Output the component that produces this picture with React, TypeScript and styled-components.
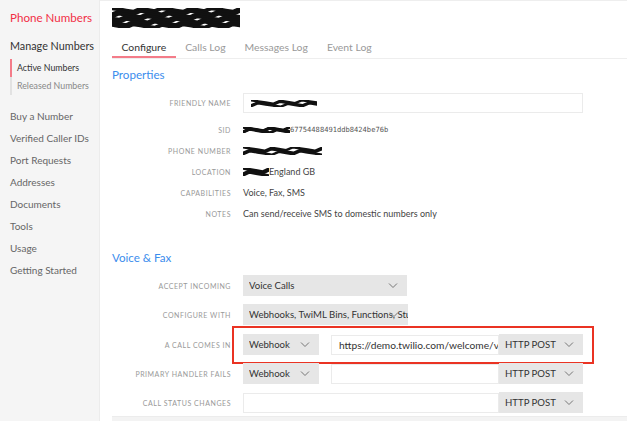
import { FC, ReactNode } from 'react'
import styled, { createGlobalStyle } from 'styled-components'

const GlobalStyle = createGlobalStyle`
  html, body {
    margin: 0;
    padding: 0;
    height: 100%;
    overflow: hidden;
    background: #fff;
  }

  body {
    font-family: Lato, "Open Sans", "Liberation Sans", sans-serif;
    color: #333;
  }
`

const Page = styled.div`
  display: flex;
  width: 627px;
  height: 421px;
  overflow: hidden;
`

const SideBar = styled.nav`
  display: flex;
  flex: 0 0 100px;
  flex-direction: column;
  background: #f5f5f5;
  border-right: 1px solid #ececec;
  box-sizing: border-box;
  padding: 10px 0 0 10px;
  white-space: nowrap;
`

const SideTitle = styled.div`
  color: #f22f46;
  font-size: 11.6px;
  line-height: 16px;
`

const SideHeading = styled.div`
  color: #333;
  font-size: 10.8px;
  line-height: 16px;
  margin-top: 12px;
`

const SubList = styled.div`
  display: flex;
  flex-direction: column;
  margin: 5px 0 10px;
`

const SubItem = styled.div<{ $active?: boolean }>`
  border-left: 2px solid ${p => (p.$active ? '#f47c89' : '#e2e2e2')};
  color: ${p => (p.$active ? '#333' : '#888')};
  font-size: 8.8px;
  line-height: 18px;
  padding-left: 5px;
`

const SideItem = styled.div`
  color: #666;
  font-size: 10px;
  line-height: 22px;
`

const Main = styled.main`
  display: flex;
  flex: 1 1 auto;
  flex-direction: column;
  border-top: 1px solid #eee;
  padding: 7px 0 0 12px;
  min-width: 0;
`

const Header = styled.div`
  display: flex;
  height: 22px;
`

const Tabs = styled.div`
  display: flex;
  margin-top: 12px;
  border-bottom: 1px solid #eee;
`

const Tab = styled.div<{ $active?: boolean }>`
  color: ${p => (p.$active ? '#333' : '#999')};
  font-size: 10.4px;
  line-height: 15px;
  padding: 0 9.5px 1px;
  border-bottom: 2px solid ${p => (p.$active ? '#f47c89' : 'transparent')};
`

const SectionTitle = styled.h2<{ $gap: number }>`
  color: #3b8ded;
  font-size: 11.6px;
  font-weight: 400;
  line-height: 16px;
  margin: ${p => p.$gap}px 0 0;
`

const Form = styled.div<{ $gap: number }>`
  display: flex;
  flex-direction: column;
  margin-top: ${p => p.$gap}px;
`

const Row = styled.div<{ $height: number; $gap?: number; $marked?: boolean }>`
  position: relative;
  display: flex;
  align-items: center;
  height: ${p => p.$height}px;
  margin-top: ${p => p.$gap ?? 0}px;

  ${p =>
    p.$marked &&
    `
    &::after {
      content: '';
      position: absolute;
      left: 120px;
      top: -8px;
      width: 362px;
      height: 38px;
      border: 2px solid #ea3323;
      box-sizing: border-box;
      pointer-events: none;
    }
  `}
`

const Label = styled.div`
  flex: 0 0 119px;
  color: #999;
  font-size: 7px;
  letter-spacing: 0.55px;
  text-align: right;
  text-transform: uppercase;
  margin-right: 12px;
  white-space: nowrap;
`

const Value = styled.div`
  display: flex;
  align-items: center;
  color: #444;
  font-size: 9px;
  white-space: nowrap;
`

const Mono = styled.span`
  color: #555;
  font-family: "DejaVu Sans Mono", "Liberation Mono", monospace;
  font-size: 7.1px;
`

const TextBox = styled.div<{ $width: number }>`
  display: flex;
  align-items: center;
  width: ${p => p.$width}px;
  height: 20px;
  box-sizing: border-box;
  border: 1px solid #ebebeb;
  padding: 0 7px;
  color: #333;
  font-size: 10.2px;
  overflow: hidden;
  white-space: nowrap;
`

const Select = styled.div<{ $width: number }>`
  position: relative;
  display: flex;
  align-items: center;
  width: ${p => p.$width}px;
  height: 21px;
  box-sizing: border-box;
  background: #e6e6e6;
  padding: 0 0 0 6px;
  color: #333;
  font-size: 9.6px;
  overflow: hidden;
`

const SelectText = styled.span`
  flex: 1 1 auto;
  min-width: 0;
  overflow: hidden;
  white-space: nowrap;
`

const Chevron = styled.svg`
  position: absolute;
  right: 9px;
  top: 7px;
  z-index: 1;
`

const Controls = styled.div`
  display: flex;
  align-items: center;
`

const Spacer = styled.div`
  width: 12px;
`

const Footer = styled.div`
  height: 10px;
  margin-top: 3px;
  background: #f3f3f3;
  border-top: 1px solid #ececec;
`

const Scribble: FC<{ width: number; height: number; thick?: number }> = ({ width, height, thick = 3 }) => {
  const lines: string[] = []
  const n = Math.max(3, Math.round(height / 3))
  for (let i = 0; i < n; i++) {
    const y = 2 + (i * (height - 4)) / (n - 1)
    const pts: string[] = []
    const steps = Math.round(width / 7)
    for (let s = 0; s <= steps; s++) {
      const x = (s * width) / steps
      const dy = ((s * 37 + i * 13) % 7) - 3
      pts.push(`${x.toFixed(1)},${(y + dy * 0.6).toFixed(1)}`)
    }
    lines.push(pts.join(' '))
  }
  return (
    <svg width={width} height={height} viewBox={`0 0 ${width} ${height}`}>
      {lines.map((pts, i) => (
        <polyline key={i} points={pts} fill="none" stroke="#111" strokeWidth={thick} strokeLinejoin="round" strokeLinecap="round" />
      ))}
    </svg>
  )
}

const Dropdown: FC<{ width: number; children: ReactNode }> = ({ width, children }) => (
  <Select $width={width}>
    <SelectText>{children}</SelectText>
    <Chevron width="10" height="7" viewBox="0 0 10 7">
      <path d="M1 1.5 L5 5.5 L9 1.5" fill="none" stroke="#777" strokeWidth="1" />
    </Chevron>
  </Select>
)

const Field: FC<{ label: string; height: number; gap?: number; marked?: boolean; children: ReactNode }> = ({
  label,
  height,
  gap,
  marked,
  children,
}) => (
  <Row $height={height} $gap={gap} $marked={marked}>
    <Label>{label}</Label>
    {children}
  </Row>
)

const sideItems = ['Buy a Number', 'Verified Caller IDs', 'Port Requests', 'Addresses', 'Documents', 'Tools', 'Usage', 'Getting Started']

const App = () => {
  return (
    <Page>
      <GlobalStyle />
      <SideBar>
        <SideTitle>Phone Numbers</SideTitle>
        <SideHeading>Manage Numbers</SideHeading>
        <SubList>
          <SubItem $active>Active Numbers</SubItem>
          <SubItem>Released Numbers</SubItem>
        </SubList>
        {sideItems.map(item => (
          <SideItem key={item}>{item}</SideItem>
        ))}
      </SideBar>
      <Main>
        <Header>
          <Scribble width={128} height={20} thick={4} />
        </Header>
        <Tabs>
          <Tab $active>Configure</Tab>
          <Tab>Calls Log</Tab>
          <Tab>Messages Log</Tab>
          <Tab>Event Log</Tab>
        </Tabs>
        <SectionTitle $gap={8}>Properties</SectionTitle>
        <Form $gap={10}>
          <Field label="Friendly Name" height={20}>
            <TextBox $width={340}>
              <Scribble width={66} height={7} thick={2.5} />
            </TextBox>
          </Field>
          <Field label="SID" height={21} gap={6}>
            <Value>
              <Scribble width={47} height={6} thick={3} />
              <Mono>67754488491ddb8424be76b</Mono>
            </Value>
          </Field>
          <Field label="Phone Number" height={21}>
            <Value>
              <Scribble width={79} height={8} thick={2.5} />
            </Value>
          </Field>
          <Field label="Location" height={21}>
            <Value>
              <Scribble width={26} height={8} thick={3} />
              England GB
            </Value>
          </Field>
          <Field label="Capabilities" height={21}>
            <Value>Voice, Fax, SMS</Value>
          </Field>
          <Field label="Notes" height={21}>
            <Value>Can send/receive SMS to domestic numbers only</Value>
          </Field>
        </Form>
        <SectionTitle $gap={26}>Voice &amp; Fax</SectionTitle>
        <Form $gap={9}>
          <Field label="Accept Incoming" height={21}>
            <Dropdown width={164}>Voice Calls</Dropdown>
          </Field>
          <Field label="Configure With" height={21} gap={8}>
            <Dropdown width={165}>Webhooks, TwiML Bins, Functions, Studio, Proxy</Dropdown>
          </Field>
          <Field label="A Call Comes In" height={21} gap={9} marked>
            <Controls>
              <Dropdown width={76}>Webhook</Dropdown>
              <Spacer />
              <TextBox $width={168}>https://demo.twilio.com/welcome/voice/</TextBox>
              <Dropdown width={84}>HTTP POST</Dropdown>
            </Controls>
          </Field>
          <Field label="Primary Handler Fails" height={21} gap={8}>
            <Controls>
              <Dropdown width={76}>Webhook</Dropdown>
              <Spacer />
              <TextBox $width={168} />
              <Dropdown width={84}>HTTP POST</Dropdown>
            </Controls>
          </Field>
          <Field label="Call Status Changes" height={21} gap={8}>
            <Controls>
              <TextBox $width={256} />
              <Dropdown width={84}>HTTP POST</Dropdown>
            </Controls>
          </Field>
        </Form>
        <Footer />
      </Main>
    </Page>
  )
}

export default App
